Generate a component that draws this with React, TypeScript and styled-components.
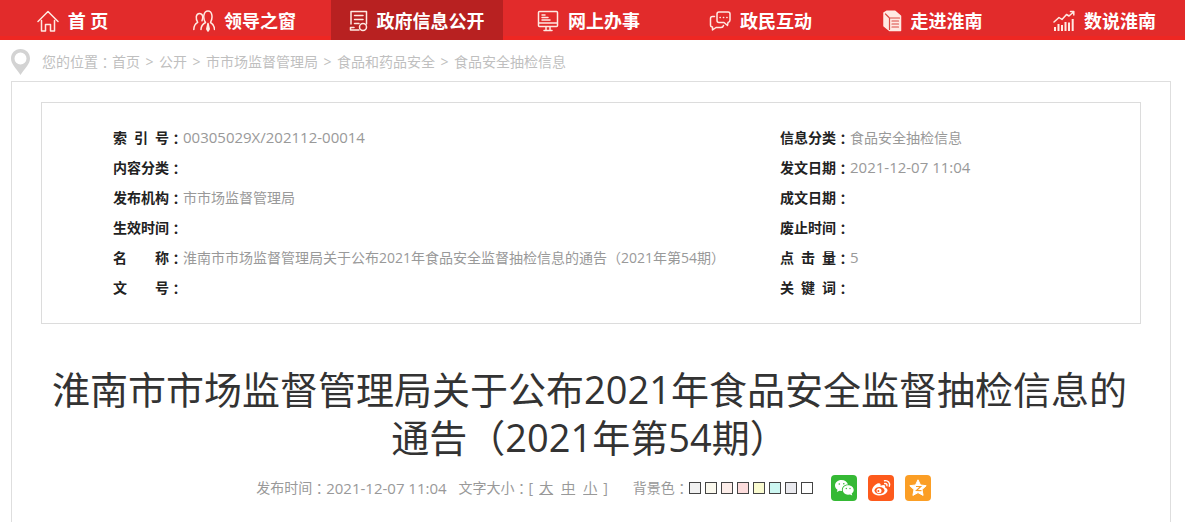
import React from "react";
import styled, { createGlobalStyle } from "styled-components";

const GlobalStyle = createGlobalStyle`
  * { box-sizing: border-box; }
  body {
    margin: 0;
    background: #fff;
    color: #999;
    font-family: "Open Sans", "Noto Sans CJK SC", sans-serif;
    font-size: 14px;
    line-height: 30px;
  }
  a { color: inherit; text-decoration: none; }
  h1, p, ul, dl, dd { margin: 0; padding: 0; }
`;

const NavBar = styled.nav`
  overflow: hidden;
  background: linear-gradient(#e22b2b 36px, #ee2723 36px);
`;

const NavList = styled.ul`
  display: flex;
  margin: 0 -6px 0 -13px;
  list-style: none;
`;

const NavItem = styled.li<{ $active?: boolean }>`
  flex: 1;
  background: ${(p) => (p.$active ? "#b82121" : "transparent")};
`;

const NavLink = styled.a`
  display: flex;
  align-items: center;
  justify-content: center;
  gap: 9px;
  height: 40px;
  padding: 2px 1px 0 0;
  color: #fff;
  font-size: 18px;
  font-weight: 700;
  line-height: 36px;
  white-space: pre;
`;

const NavIcon = styled.svg<{ $width?: number }>`
  width: ${(p) => p.$width ?? 22}px;
  height: 22px;
  flex: none;
  fill: none;
  stroke: #ffe9e2;
  stroke-width: 1.5;
  stroke-linecap: round;
  stroke-linejoin: round;
`;

const Breadcrumb = styled.nav`
  display: flex;
  align-items: center;
  gap: 11px;
  height: 41px;
  padding: 3px 10px 0;
  color: #bfbfbf;
`;

const Trail = styled.p`
  display: flex;
  white-space: pre;
`;

const Separator = styled.span`
  width: 19px;
  text-align: center;
`;

const Pin = styled.svg`
  width: 21px;
  height: 26px;
  flex: none;
`;

const Article = styled.main`
  margin: 0 14px 0 11px;
  padding: 20px 29px 40px;
  border: 1px solid #dedede;
  border-bottom: 0;
`;

const InfoBox = styled.section`
  display: grid;
  grid-template-columns: 667fr 289fr;
  padding: 20px 71px;
  border: 1px solid #dcdcdc;
`;

const InfoList = styled.dl``;

const InfoRow = styled.div`
  display: flex;
  height: 30px;
  white-space: nowrap;
`;

const Label = styled.dt`
  display: flex;
  width: 70px;
  flex: none;
  color: #222;
  font-weight: 700;
`;

const LabelText = styled.span`
  display: flex;
  width: 56px;
  justify-content: space-between;
`;

const Colon = styled.span`
  font-family: "Noto Sans CJK TC", sans-serif;
`;

const Value = styled.dd<{ $numeric?: boolean }>`
  font-size: ${(p) => (p.$numeric ? 15 : 14)}px;
  line-height: ${(p) => (p.$numeric ? 28 : 30)}px;
`;

const Title = styled.h1`
  padding: 41px 3px 0 0;
  color: #333;
  font-size: 38px;
  font-weight: 400;
  line-height: 48px;
  text-align: center;
`;

const Meta = styled.div`
  display: flex;
  align-items: center;
  justify-content: center;
  height: 30px;
  margin-top: 12px;
  padding-left: 5px;
  white-space: nowrap;
`;

const MetaGroup = styled.div<{ $gap?: number }>`
  display: flex;
  align-items: center;
  margin-left: ${(p) => p.$gap ?? 0}px;
`;

const Time = styled.time`
  font-size: 15px;
  line-height: 28px;
`;

const SizeButtons = styled.span`
  display: flex;
  gap: 8px;
  padding: 0 6px;
`;

const SizeButton = styled.button`
  padding: 0;
  border: 0;
  background: none;
  color: inherit;
  font: inherit;
  text-decoration: underline;
  cursor: pointer;
`;

const Swatches = styled.span`
  display: flex;
  gap: 4px;
`;

const Swatch = styled.button<{ $color: string }>`
  width: 12px;
  height: 12px;
  padding: 0;
  border: 1px solid #444;
  background: ${(p) => p.$color};
  cursor: pointer;
`;

const ShareLinks = styled.div`
  display: flex;
  gap: 11px;
  margin-left: 18px;
`;

const ShareLink = styled.a<{ $color: string }>`
  display: flex;
  width: 26px;
  height: 26px;
  border-radius: 4px;
  background: ${(p) => p.$color};
`;

const navItems = [
  {
    text: "首 页",
    icon: <path d="M1 11.5 11 1.5 21 11.5M4.5 10.5V21H8.5V14.5H13.5V21H17.5V10.5" />,
  },
  {
    text: "领导之窗",
    icon: (
      <>
        <path d="M.8 19.5C.8 15 2.5 13.5 4.7 12.3 2.5 9 2.6 3.5 6.5 3.5 9.8 3.5 10.5 7 9 10.8" />
        <path d="M8 19.5C8 15.5 9.8 14 12.5 12.5 9.5 8 10.5 1 15 1S20 8 17.5 12.5C20 14 21.5 15.5 21.5 19.5" />
        <path d="M15 13.5 13.8 19 15 21 16.2 19Z" fill="#ffe9e2" />
      </>
    ),
  },
  {
    text: "政府信息公开",
    active: true,
    width: 19,
    icon: (
      <>
        <path d="M10 20H1.5V17.5H5M2 14V1.5H17.5V14M5.5 5.5H14M5.500 9.500H14M5.500 13.500H10" />
        <circle cx="14" cy="17" r="3.5" />
      </>
    ),
  },
  {
    text: "网上办事",
    icon: (
      <>
        <rect x="1.5" y="1.5" width="19" height="15" rx="1" />
        <path d="M2 13H20M5 5H8M5 7.5H11M5 10H13M9 17V20.5H7M13 17V20.5H15M9 20.5H13" />
      </>
    ),
  },
  {
    text: "政民互动",
    icon: (
      <>
        <path d="M10 2H19Q21 2 21 4V10Q21 12 19 12.5L18.5 15.5 15 12.5H10Q8 12.5 8 10.5V4Q8 2 10 2Z" />
        <path d="M5.5 6.5H3.5Q1.5 6.5 1.5 8.5V15Q1.5 17 3.5 17V20L7 17.5H12Q14 17.5 14.5 15.5M11 7.5H11.3M14.4 7.5H14.7M17.8 7.5H18.1" />
      </>
    ),
  },
  {
    text: "走进淮南",
    width: 19,
    icon: (
      <>
        <path d="M1 3 4 1.2H12L17.5 6V20.5H6.5L1 16Z" fill="#ffe9e2" />
        <path d="M6.5 8V19.5M6.5 8H16.5M9 11H15.5M9 14H15.5M9 17H15.5M2.5 4 6 7.5" stroke="#d94a42" strokeWidth="1.2" />
      </>
    ),
  },
  {
    text: "数说淮南",
    icon: (
      <>
        <path d="M1 12 6 7.5 9 9.5 13.5 4.5 16 6 20.5 2M17.5 1.5H20.8V5" />
        <path d="M2 21V17M5.5 21V14M9 21V15M12.5 21V12M16 21V12.5M19.7 21V9" strokeWidth="2" strokeLinecap="butt" />
      </>
    ),
  },
];

const crumbs = ["首页", "公开", "市市场监督管理局", "食品和药品安全", "食品安全抽检信息"];

const articleTitle =
  "淮南市市场监督管理局关于公布2021年食品安全监督抽检信息的通告（2021年第54期）";

type Info = { label: string; value?: string; numeric?: boolean };

const leftInfo: Info[] = [
  { label: "索引号", value: "00305029X/202112-00014", numeric: true },
  { label: "内容分类" },
  { label: "发布机构", value: "市市场监督管理局" },
  { label: "生效时间" },
  { label: "名称", value: articleTitle },
  { label: "文号" },
];

const rightInfo: Info[] = [
  { label: "信息分类", value: "食品安全抽检信息" },
  { label: "发文日期", value: "2021-12-07 11:04", numeric: true },
  { label: "成文日期" },
  { label: "废止时间" },
  { label: "点击量", value: "5", numeric: true },
  { label: "关键词" },
];

const swatches = [
  ["灰", "#f1f1f1"],
  ["米", "#fbf9ee"],
  ["杏", "#fdeeea"],
  ["粉", "#fcdcdc"],
  ["黄", "#fafbd0"],
  ["青", "#cdf7f2"],
  ["银", "#e9e9ee"],
  ["白", "#ffffff"],
];

function InfoColumn({ items }: { items: Info[] }) {
  return (
    <InfoList>
      {items.map(({ label, value, numeric }) => (
        <InfoRow key={label}>
          <Label>
            <LabelText>
              {Array.from(label).map((c) => (
                <span key={c}>{c}</span>
              ))}
            </LabelText>
            <Colon>：</Colon>
          </Label>
          <Value $numeric={numeric}>{value}</Value>
        </InfoRow>
      ))}
    </InfoList>
  );
}

export default function App() {
  return (
    <>
      <GlobalStyle />
      <NavBar>
        <NavList>
          {navItems.map((item) => (
            <NavItem key={item.text} $active={item.active}>
              <NavLink href="#">
                <NavIcon
                  viewBox={`0 0 ${item.width ?? 22} 22`}
                  $width={item.width}
                  aria-hidden="true"
                >
                  {item.icon}
                </NavIcon>
                {item.text}
              </NavLink>
            </NavItem>
          ))}
        </NavList>
      </NavBar>
      <Breadcrumb>
        <Pin viewBox="0 0 21 26" aria-hidden="true">
          <path
            fillRule="evenodd"
            fill="#d3d3d3"
            d="M10.5 0C4.7 0 1 4.3 1 9.5 1 15 6 19 10.5 26 15 19 20 15 20 9.5 20 4.3 16.3 0 10.5 0ZM10.5 3.5A6 6 0 1 1 10.5 15.5 6 6 0 1 1 10.5 3.5Z"
          />
        </Pin>
        <Trail>
          您的位置<Colon>：</Colon>
          {crumbs.map((c, i) => (
            <React.Fragment key={c}>
              {i > 0 && <Separator>&gt;</Separator>}
              <a href="#">{c}</a>
            </React.Fragment>
          ))}
        </Trail>
      </Breadcrumb>
      <Article>
        <InfoBox>
          <InfoColumn items={leftInfo} />
          <InfoColumn items={rightInfo} />
        </InfoBox>
        <Title>{articleTitle}</Title>
        <Meta>
          <MetaGroup>
            发布时间<Colon>：</Colon>
            <Time>2021-12-07 11:04</Time>
          </MetaGroup>
          <MetaGroup $gap={12}>
            文字大小<Colon>：</Colon>[
            <SizeButtons>
              <SizeButton>大</SizeButton>
              <SizeButton>中</SizeButton>
              <SizeButton>小</SizeButton>
            </SizeButtons>
            ]
          </MetaGroup>
          <MetaGroup $gap={25}>
            背景色<Colon>：</Colon>
            <Swatches>
              {swatches.map(([name, color]) => (
                <Swatch key={name} $color={color} aria-label={name} />
              ))}
            </Swatches>
          </MetaGroup>
          <ShareLinks>
            <ShareLink href="#" $color="#35b935" aria-label="微信">
              <svg viewBox="0 0 26 26" aria-hidden="true">
                <path fill="#fff" d="M10.5 5C6.6 5 4 7.6 4 10.5 4 12.3 5 13.8 6.5 14.8L5.8 17 8.5 15.7 11 16C10.3 12 13.5 9.4 17 9.5 16.3 6.8 13.8 5 10.5 5Z" />
                <path fill="#fff" d="M17 10.3C13.7 10.3 11.8 12.5 11.8 15S14 19.7 17 19.7L19 19.4 21.3 20.6 20.7 18.6C22 17.7 22.7 16.4 22.7 15 22.7 12.5 20.4 10.3 17 10.3Z" />
                <g fill="#35b935">
                  <circle cx="8.3" cy="9" r=".8" />
                  <circle cx="12.8" cy="8.8" r=".8" />
                  <circle cx="15.3" cy="13.5" r=".7" />
                  <circle cx="19" cy="13.5" r=".7" />
                </g>
              </svg>
            </ShareLink>
            <ShareLink href="#" $color="#fd5a1c" aria-label="微博">
              <svg viewBox="0 0 26 26" aria-hidden="true">
                <path fill="#fff" d="M10.5 8.2C7.5 8.7 4 12.5 4 15.4 4 18.5 7.8 20.5 11.8 20.5 16.3 20.5 19.5 17.8 19.5 15.3 19.5 13.5 18 12.7 17 12.4 17.8 10 16 9.3 12.5 10.7 13 8.9 12.2 7.9 10.5 8.2Z" />
                <ellipse cx="11.5" cy="15.5" rx="5" ry="3.5" fill="#fd5a1c" />
                <circle cx="11" cy="15.7" r="2.5" fill="#fff" />
                <circle cx="10.4" cy="16" r="1" fill="#fd5a1c" />
                <path fill="none" stroke="#fff" strokeWidth="1.4" strokeLinecap="round" d="M16.5 5.7C20 5 22.5 8 21.3 11.2M16.7 8.5C18.3 8.2 19.3 9.4 18.9 10.7" />
              </svg>
            </ShareLink>
            <ShareLink href="#" $color="#fb9e25" aria-label="QQ空间">
              <svg viewBox="0 0 26 26" aria-hidden="true">
                <path fill="#fff" stroke="#fff" strokeLinejoin="round" d="M13 4.8 15.5 10 21.2 10.7 17 14.6 18.1 20.4 13 17.6 7.9 20.4 9 14.6 4.8 10.7 10.5 10Z" />
                <path fill="none" stroke="#fb9e25" strokeWidth="1.2" d="M11 11.5H15.7L11.5 15.5 16.5 15.7" />
              </svg>
            </ShareLink>
          </ShareLinks>
        </Meta>
      </Article>
    </>
  );
}
